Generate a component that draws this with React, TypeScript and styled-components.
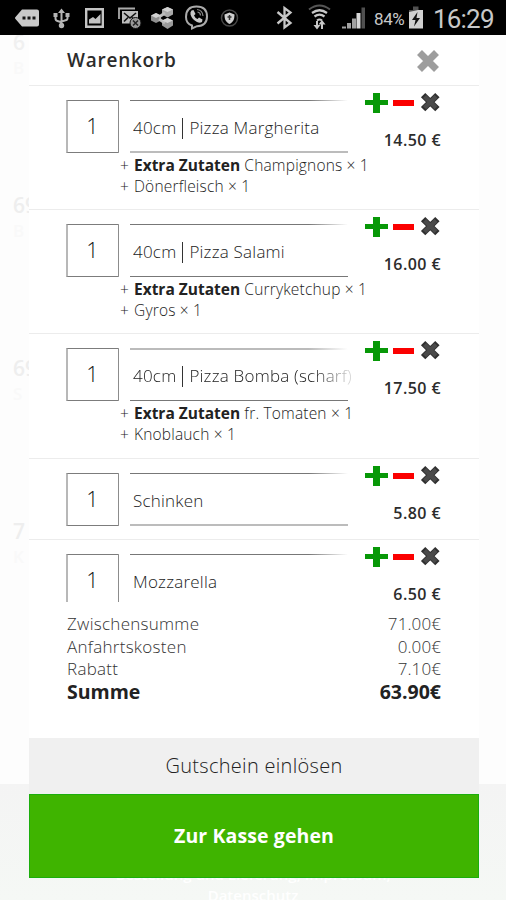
import React from "react";
import styled, { createGlobalStyle } from "styled-components";

const GlobalStyle = createGlobalStyle`
  * { box-sizing: border-box; }
  body { margin: 0; background: #fff; font-family: "Open Sans", "Noto Sans", sans-serif; color: #555; }
`;

const Screen = styled.div`
  position: relative;
  width: 506px;
  height: 900px;
  overflow: hidden;
  display: flex;
  flex-direction: column;
  background: #fdfdfd;
`;

const StatusBar = styled.header`
  height: 35px;
  flex: none;
  display: flex;
  align-items: center;
  background: #000;
  color: #c8c8c8;
  font-family: Roboto, sans-serif;
  position: relative;
`;

const Glyph = styled.svg<{ $gap: number }>`
  flex: none;
  display: block;
  height: 35px;
  margin-left: ${(p) => p.$gap}px;
`;

const Percent = styled.span`
  width: 32px;
  margin: 3px 0 0 8px;
  font-size: 17px;
  letter-spacing: -0.4px;
  white-space: nowrap;
`;

const Clock = styled.span`
  margin: 3px 0 0 9px;
  font-size: 26px;
  line-height: 30px;
  letter-spacing: -0.8px;
  white-space: nowrap;
`;

const Backdrop = styled.div`
  position: absolute;
  inset: 35px 0 0 0;
  overflow: hidden;
`;

const BackFooter = styled.div`
  position: absolute;
  inset: 749px 0 0 0;
  background: linear-gradient(#f4f4f4, #f5f8f5);
`;

const Ghost = styled.span<{ $y: number; $size: number; $tone: string }>`
  position: absolute;
  left: 13px;
  top: ${(p) => p.$y}px;
  white-space: nowrap;
  font-size: ${(p) => p.$size}px;
  line-height: 24px;
  font-weight: 600;
  color: ${(p) => p.$tone};
`;

const Imprint = styled.p`
  position: absolute;
  left: 0;
  right: 0;
  top: 829px;
  margin: 0;
  text-align: center;
  font-size: 15px;
  line-height: 21px;
  font-weight: 600;
  color: #fff;
`;

const Sheet = styled.main`
  position: relative;
  width: 450px;
  height: 843px;
  margin-left: 29px;
  display: flex;
  flex-direction: column;
  background: #fff;
`;

const SheetHead = styled.div`
  height: 50px;
  flex: none;
  display: flex;
  justify-content: space-between;
  align-items: flex-start;
  padding: 12px 38px 0;
`;

const Title = styled.h1`
  margin: 0;
  font-size: 19px;
  line-height: 26px;
  font-weight: 600;
  letter-spacing: 0.75px;
  color: #2c2c2c;
`;

const IconButton = styled.button`
  display: block;
  padding: 0;
  border: 0;
  background: none;
  svg { display: block; }
`;

const List = styled.ul`
  height: 517px;
  flex: none;
  overflow: hidden;
  margin: 0;
  padding: 0;
  list-style: none;
`;

const Item = styled.li<{ $h: number }>`
  height: ${(p) => p.$h}px;
  border-top: 1px solid #ececec;
  padding: 14px 38px 0 37px;
  display: grid;
  grid-template-columns: 53px 11px 222px 1fr;
  grid-template-rows: 53px auto;
  align-content: start;
`;

const Qty = styled.div`
  border: 1px solid #7c7c7c;
  border-left: 2px solid #b8b8b8;
  border-right-color: #8c8c8c;
  border-radius: 1px;
  font-size: 21.5px;
  font-weight: 300;
  line-height: 50px;
  text-align: center;
  padding-right: 1px;
  color: #111;
`;

const Field = styled.div<{ $softTop?: boolean; $softBase?: boolean }>`
  grid-column: 3;
  position: relative;
  width: 218px;
  height: 53px;
  padding: 1px 0 0 3px;
  border-bottom: ${(p) => (p.$softBase ? "2px solid #bcbcbc" : "1px solid #777")};
  font-size: 17px;
  font-weight: 300;
  line-height: 53px;
  white-space: nowrap;
  color: #222;
  display: flex;
  &::before {
    content: "";
    position: absolute;
    inset: 0 0 auto 0;
    height: ${(p) => (p.$softTop ? 2 : 1)}px;
    background: linear-gradient(to right, ${(p) => (p.$softTop ? "#bbb" : "#777")} 82%, transparent);
  }
`;

const Name = styled.span<{ $fade?: boolean }>`
  letter-spacing: 0.22px;
  flex: none;
  width: 220px;
  overflow: hidden;
  ${(p) => p.$fade && "mask-image: linear-gradient(to right, #000 82%, rgba(0,0,0,.2) 98%);"}
`;

const Bar = styled.i`
  display: inline-block;
  width: 1px;
  height: 21px;
  margin: 0 6px;
  vertical-align: -5px;
  background: #333;
`;

const Side = styled.div`
  grid-column: 4;
  display: flex;
  flex-direction: column;
  align-items: flex-end;
  margin-top: -10px;
`;

const Actions = styled.div`
  display: flex;
  gap: 4px;
  height: 24px;
`;

const Price = styled.span`
  margin-top: 15px;
  font-size: 16px;
  line-height: 23px;
  font-weight: 600;
  letter-spacing: 0.42px;
  white-space: nowrap;
  color: #2c2c2c;
`;

const Extras = styled.div`
  grid-column: 1 / -1;
  padding: 2px 0 0 54px;
  font-size: 15.5px;
  font-weight: 300;
  letter-spacing: 0.18px;
  line-height: 21px;
  white-space: nowrap;
  color: #222;
  b { font-weight: 700; letter-spacing: 0; color: #222; }
`;

const Plus = styled.span`
  display: inline-block;
  width: 14px;
`;

const Totals = styled.dl`
  margin: 0;
  padding: 11px 38px 0;
  height: 151px;
  flex: none;
`;

const Total = styled.div<{ $strong?: boolean }>`
  display: flex;
  justify-content: space-between;
  font-size: ${(p) => (p.$strong ? 19.5 : 17)}px;
  line-height: 22.7px;
  font-weight: ${(p) => (p.$strong ? 700 : 300)};
  color: ${(p) => (p.$strong ? "#222" : "#333")};
  dt, dd { margin: 0; }
  dt { letter-spacing: ${(p) => (p.$strong ? 0 : 0.28)}px; }
  dd { letter-spacing: ${(p) => (p.$strong ? 0 : 0.1)}px; }
`;

const VoucherButton = styled.button`
  height: 56px;
  flex: none;
  margin-top: -15px;
  border: 0;
  padding: 0 0 2px;
  background: #f0f0f0;
  font: 300 20px "Open Sans", sans-serif;
  letter-spacing: 0.3px;
  color: #222;
`;

const CheckoutButton = styled.button`
  height: 84px;
  flex: none;
  border: 1px solid #1cae0c;
  padding: 0 0 2px;
  background: #3fb400;
  font: 700 19.5px "Open Sans", sans-serif;
  letter-spacing: 0.1px;
  color: #fff;
`;

type Line = { text: string; bold?: string };
type Entry = {
  size?: string;
  name: string;
  price: string;
  h: number;
  fade?: boolean;
  softTop?: boolean;
  softBase?: boolean;
  extras: Line[];
};

const entries: Entry[] = [
  { size: "40cm", name: "Pizza Margherita", price: "14.50 €", h: 124, softBase: true, extras: [{ bold: "Extra Zutaten", text: "Champignons × 1" }, { text: "Dönerfleisch × 1" }] },
  { size: "40cm", name: "Pizza Salami", price: "16.00 €", h: 124, extras: [{ bold: "Extra Zutaten", text: "Curryketchup × 1" }, { text: "Gyros × 1" }] },
  { size: "40cm", name: "Pizza Bomba (scharf)", price: "17.50 €", h: 125, fade: true, softTop: true, extras: [{ bold: "Extra Zutaten", text: "fr. Tomaten × 1" }, { text: "Knoblauch × 1" }] },
  { name: "Schinken", price: "5.80 €", h: 81, softBase: true, extras: [] },
  { name: "Mozzarella", price: "6.50 €", h: 81, extras: [] },
];

const CartItem = ({ e }: { e: Entry }) => (
  <Item $h={e.h}>
    <Qty>1</Qty>
    <Field $softTop={e.softTop} $softBase={e.softBase}>
      <Name $fade={e.fade}>
        {e.size && <>{e.size}<Bar /></>}
        {e.name}
      </Name>
    </Field>
    <Side>
      <Actions>
        <IconButton aria-label="+">
          <svg width="23" height="24"><path d="M8 3h7v7h8v5h-8v8H8v-8H0v-5h8z" fill="#079807" /></svg>
        </IconButton>
        <IconButton aria-label="−">
          <svg width="23" height="24"><path d="M1 10h21v6H1z" fill="#fb0000" /></svg>
        </IconButton>
        <IconButton aria-label="×">
          <svg width="22" height="24" viewBox="0 0 22 24">
            <path d="M4.100 5.100L18.400 19.100M18.400 5.100L4.100 19.100" stroke="#303030" strokeWidth="6.200" />
            <path d="M5.600 6.500L17 17.700M17 6.500L5.600 17.700" stroke="#4a4a4a" strokeWidth="4.400" />
          </svg>
        </IconButton>
      </Actions>
      <Price>{e.price}</Price>
    </Side>
    {e.extras.length > 0 && (
      <Extras>
        {e.extras.map((x) => (
          <div key={x.text}><Plus>+</Plus>{x.bold && <><b>{x.bold}</b> </>}{x.text}</div>
        ))}
      </Extras>
    )}
  </Item>
);

export default function App() {
  return (
    <>
      <GlobalStyle />
      <Screen>
        <Backdrop>
          <BackFooter />
          <Ghost $y={-5} $size={21} $tone="#f0f0f0">6</Ghost>
          <Ghost $y={21} $size={17} $tone="#f9f9f9">B</Ghost>
          <Ghost $y={158} $size={21} $tone="#eeeeee">69</Ghost>
          <Ghost $y={184} $size={17} $tone="#f9f9f9">B</Ghost>
          <Ghost $y={321} $size={21} $tone="#eeeeee">69</Ghost>
          <Ghost $y={347} $size={17} $tone="#f9f9f9">S</Ghost>
          <Ghost $y={484} $size={21} $tone="#eeeeee">7</Ghost>
          <Ghost $y={510} $size={17} $tone="#f9f9f9">K</Ghost>
          <Imprint>Bestellung und Lieferung, Impressum,<br />Datenschutz</Imprint>
        </Backdrop>
        <StatusBar>
          <Glyph $gap={15} width="25" viewBox="0 0 25 35">
            <path d="M7 9.500h15q2 0 2 2v13q0 2-2 2H7L.5 19q-1-1 0-2z" fill="#c9c9c9" />
            <path d="M7.500 16.500h3v3h-3zM12.500 16.500h3v3h-3zM17.500 16.500h3v3h-3z" fill="#151515" />
          </Glyph>
          <Glyph $gap={13} width="17" viewBox="0 0 17 35" fill="none" stroke="#b5b5b5" strokeWidth="2">
            <path d="M8.500 12v13M2.500 15v3.500q0 2 2 2.500l4 1.300M14.500 15v3q0 2-2 2.300l-4 1.300" />
            <path d="M5 13l3.500-4.500L12 13zM.5 13h4v4h-4zM12.500 13h4v4h-4z" fill="#b5b5b5" stroke="none" />
            <circle cx="8.500" cy="25.500" r="2.700" fill="#b5b5b5" stroke="none" />
          </Glyph>
          <Glyph $gap={15} width="19" viewBox="0 0 19 35">
            <path d="M1.200 9.200h16.600v17.600H1.200z" fill="none" stroke="#c4c4c4" strokeWidth="2.400" />
            <path d="M4 23.500v-4l4-2.500 2.500 2 5-5v9.500z" fill="#c4c4c4" />
          </Glyph>
          <Glyph $gap={14} width="24" viewBox="0 0 24 35">
            <path d="M1 19V8.500h16" fill="none" stroke="#aaa" strokeWidth="1.800" />
            <path d="M4 11h16v12.500H4z" fill="#bdbdbd" />
            <path d="M6 13l6 5 6-5M6 21.500l4-4M18 21.500l-4-4" fill="none" stroke="#111" strokeWidth="1.600" />
            <circle cx="17.500" cy="23" r="5.500" fill="#999" stroke="#111" />
            <path d="M15 20.500l5 5M20 20.500l-5 5" stroke="#222" strokeWidth="1.500" />
          </Glyph>
          <Glyph $gap={9} width="23" viewBox="0 0 23 35">
            <path d="M5 13l5 2.500v5L5 23l-5-2.500v-5z" fill="#8f8f8f" />
            <path d="M16.500 7l5.500 2.500v5l-5.500 3-5.500-3v-5z" fill="#a8a8a8" />
            <path d="M16.500 18l5.500 2.500v5L16.500 29 11 25.500v-5z" fill="#9a9a9a" />
            <path d="M8 17l6-4M8 19l6 4" stroke="#bbb" strokeWidth="3" />
            <path d="M0 15.500L5 18l5-2.500L5 13z M11 9.500l5.500 2.500L22 9.500 16.500 7z M11 20.500l5.500 2.500 5.500-2.500-5.500-2.500z" fill="#d2d2d2" />
          </Glyph>
          <Glyph $gap={10} width="25" viewBox="0 0 25 35">
            <path d="M12.500 6.500c7 0 10.500 3.500 10.500 10s-3.500 9.500-10 9.700L8 28.500V25.500C3.500 24 2 21.500 2 17 2 10 5.500 6.500 12.500 6.500z" fill="none" stroke="#aaa" strokeWidth="2" />
            <path d="M7.500 10.500l2-.5 2 4-1.500 1.500q1 2.500 3.500 3.500l1.500-1.500 3.500 2-.5 2.500q-2 1.500-5 0-5-2.500-6.500-7.500-.5-2.500 1-4z" fill="#c8c8c8" />
            <path d="M13 9.500q5.500.5 6 6.500M13.500 12q3 .5 3 3.500" fill="none" stroke="#888" strokeWidth="1.200" />
          </Glyph>
          <Glyph $gap={11} width="19" viewBox="0 0 19 35">
            <circle cx="9.500" cy="18" r="8" fill="none" stroke="#484848" strokeWidth="1.500" />
            <path d="M9.500 12.500l5 2c0 4.500-1 7.500-5 9.500-4-2-5-5-5-9.500z" fill="#d0d0d0" />
            <path d="M9.500 15v5M7.500 17h4" stroke="#333" strokeWidth="1.500" />
          </Glyph>
          <Glyph $gap={37} width="17" viewBox="0 0 17 35" fill="none" stroke="#c8c8c8" strokeWidth="2.300">
            <path d="M1.500 12l13 11L8.500 27.500V8L14.500 12.500 1.500 23.500" />
          </Glyph>
          <Glyph $gap={15} width="23" viewBox="0 0 23 35" fill="none" stroke="#c8c8c8">
            <path d="M1 9.500q10.500-8 21 0" stroke="#555" strokeWidth="2" />
            <path d="M4 13q7.500-5.500 15 0M6.500 16.500q5-3.800 10 0" strokeWidth="2.200" />
            <path d="M9 20.500q2.500-2 5 0" strokeWidth="2" />
            <path d="M9 21v5M14 29v-6" strokeWidth="2" />
            <path d="M5.500 25h7L9 29.500zM10.500 24.500h7L14 20z" fill="#c8c8c8" stroke="none" />
          </Glyph>
          <Glyph $gap={11} width="24" viewBox="0 0 24 35">
            <path d="M0 26.500h4v2H0zM5 23h4v5.500H5zM10 18.500h4v10h-4z" fill="#a2a2a2" />
            <path d="M14.500 13h4v15.500h-4z" fill="#d8d8d8" />
            <path d="M19.500 7.500h3.500v21h-3.500z" fill="#505050" />
          </Glyph>
          <Percent>84%</Percent>
          <Glyph $gap={2} width="16" viewBox="0 0 16 35">
            <path d="M5 6.500h5.500V10H15v5H1v-5h4z" fill="#505050" />
            <path d="M1 12l9-2h5v18.500H1z" fill="#d0d0d0" />
            <path d="M9.500 12L4 20h3.500L6 26.500l6-8.500H8.500z" fill="#111" />
          </Glyph>
          <Clock>16:29</Clock>
        </StatusBar>
        <Sheet>
          <SheetHead>
            <Title>Warenkorb</Title>
            <IconButton aria-label="×">
              <svg width="26" height="28" viewBox="0 0 26 28">
                <path d="M4.500 5.500L21.500 22.500M21.500 5.500L4.500 22.500" stroke="#9d9d9d" strokeWidth="7" />
              </svg>
            </IconButton>
          </SheetHead>
          <List>
            {entries.map((e) => <CartItem key={e.name} e={e} />)}
          </List>
          <Totals>
            <Total><dt>Zwischensumme</dt><dd>71.00€</dd></Total>
            <Total><dt>Anfahrtskosten</dt><dd>0.00€</dd></Total>
            <Total><dt>Rabatt</dt><dd>7.10€</dd></Total>
            <Total $strong><dt>Summe</dt><dd>63.90€</dd></Total>
          </Totals>
          <VoucherButton>Gutschein einlösen</VoucherButton>
          <CheckoutButton>Zur Kasse gehen</CheckoutButton>
        </Sheet>
      </Screen>
    </>
  );
}
